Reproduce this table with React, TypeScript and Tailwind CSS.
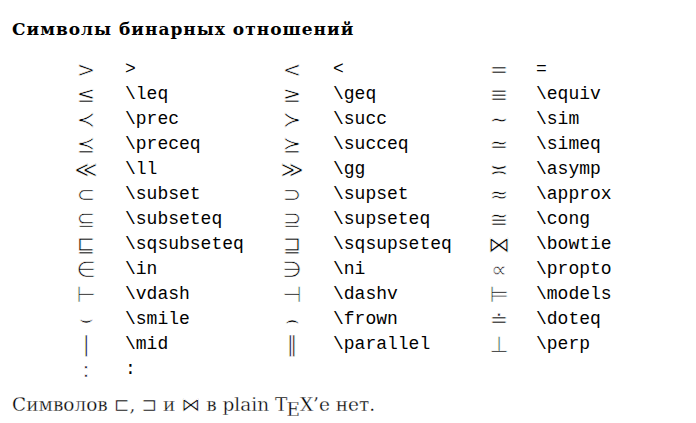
const rows: [string, string, string, string, string, string][] = [
  ['>', '>', '<', '<', '=', '='],
  ['≤', '\\leq', '≥', '\\geq', '≡', '\\equiv'],
  ['≺', '\\prec', '≻', '\\succ', '∼', '\\sim'],
  ['⪯', '\\preceq', '⪰', '\\succeq', '≃', '\\simeq'],
  ['≪', '\\ll', '≫', '\\gg', '≍', '\\asymp'],
  ['⊂', '\\subset', '⊃', '\\supset', '≈', '\\approx'],
  ['⊆', '\\subseteq', '⊇', '\\supseteq', '≅', '\\cong'],
  ['⊑', '\\sqsubseteq', '⊒', '\\sqsupseteq', '⋈', '\\bowtie'],
  ['∈', '\\in', '∋', '\\ni', '∝', '\\propto'],
  ['⊢', '\\vdash', '⊣', '\\dashv', '⊨', '\\models'],
  ['⌣', '\\smile', '⌢', '\\frown', '≐', '\\doteq'],
  ['∣', '\\mid', '∥', '\\parallel', '⊥', '\\perp'],
  [':', ':', '', '', '', ''],
];

// thin the DejaVu glyphs a little so they read like Computer Modern
const sym =
  "font-['DejaVu_Sans',sans-serif] text-[22px] leading-[24px] w-[24px] text-center [-webkit-text-stroke:0.6px_#fff]";
const code = "font-['Liberation_Mono',monospace] text-[18px]";
const small = "font-['DejaVu_Sans',sans-serif] text-[19px] [-webkit-text-stroke:0.5px_#fff]";

export default function App() {
  return (
    <div className="w-[696px] h-[423px] bg-white text-black overflow-hidden">
      <h2 className="pl-[12px] pt-[18px] font-['DejaVu_Serif',serif] font-bold text-[17px] leading-[22px] tracking-[1px]">
        Символы бинарных отношений
      </h2>
      <div className="mt-[17px] pl-[74px] grid grid-cols-[51px_155px_53px_154px_49px_1fr] auto-rows-[25px] items-center">
        {rows.map((r, i) => (
          <div key={i} className="contents">
            <div className="flex"><span className={sym}>{r[0]}</span></div>
            <div className={code}>{r[1]}</div>
            <div className="flex"><span className={sym}>{r[2]}</span></div>
            <div className={code}>{r[3]}</div>
            <div className="flex"><span className={sym}>{r[4]}</span></div>
            <div className={code}>{r[5]}</div>
          </div>
        ))}
      </div>
      <p className="pl-[12px] mt-[11px] font-['DejaVu_Serif',serif] text-[18.5px] leading-[22px] [-webkit-text-stroke:0.3px_#fff]">
        Символов <span className={small}>⊏</span>, <span className={small}>⊐</span> и{' '}
        <span className={small}>⋈</span> в plain T
        <span className="relative top-[5px] -ml-[1px]">E</span>X’е нет.
      </p>
    </div>
  );
}
